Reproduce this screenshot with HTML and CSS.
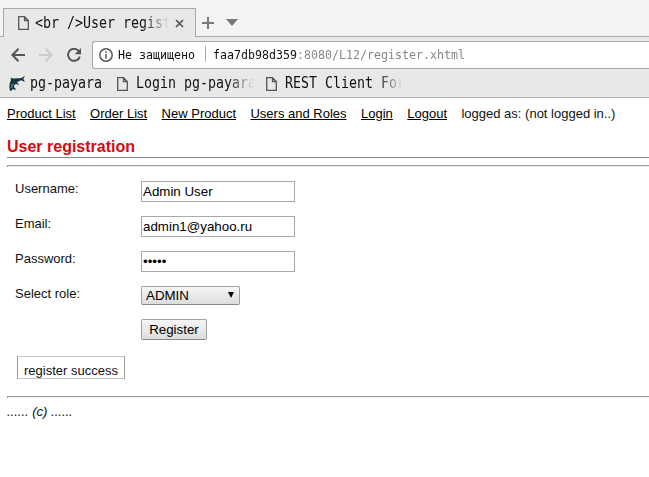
FILE: index.html
```html
<!DOCTYPE html>
<html lang="en">
<head>
<meta charset="utf-8">
<title>User registration</title>
<link rel="stylesheet" href="styles.css">
</head>
<body>
<header class="browser">
  <div class="tabstrip">
    <div class="tab">
      <svg class="doc" width="11" height="14" viewBox="0 0 11 14"><path d="M.7.7H6.5L10.3 4.5V13.3H.7ZM6.5.7V4.5H10.3"/></svg>
      <span class="mono tab-title">&lt;br /&gt;User regist</span>
      <svg class="close" width="9" height="9" viewBox="0 0 9 9"><path d="M1 1l7 7M8 1L1 8"/></svg>
    </div>
    <svg class="plus" width="12" height="12" viewBox="0 0 12 12"><path d="M6 0V12M0 6H12"/></svg>
    <svg class="caret" width="12" height="7" viewBox="0 0 12 7"><path d="M0 0H12L6 7Z"/></svg>
  </div>
  <div class="toolbar">
    <svg class="nav-icon" width="14" height="14" viewBox="0 0 14 14"><path d="M14 7H1.5M7.5 .8L1.3 7l6.2 6.2"/></svg>
    <svg class="nav-icon off" width="14" height="14" viewBox="0 0 14 14"><path d="M0 7H12.5M6.5 .8L12.7 7l-6.2 6.2"/></svg>
    <svg class="nav-icon" width="14" height="14" viewBox="0 0 14 14"><path d="M11.8 3.1A6 6 0 1 0 12.8 8.6"/><path class="tip" d="M14 0V6.3H7.7Z"/></svg>
    <div class="omnibox">
      <svg class="info" width="14" height="14" viewBox="0 0 14 14"><circle cx="7" cy="7" r="6.2"/><path d="M7 6V10.7M7 3.2V4.9"/></svg>
      <span class="mono small secure">Не защищено</span>
      <span class="mono small url">faa7db98d359<span class="path">:8080/L12/register.xhtml</span></span>
    </div>
  </div>
  <div class="bookmarks">
    <svg class="fish" width="17" height="17" viewBox="0 0 17 17"><path d="M.8 15C0 12 .3 8 2 5L1.500 2.800L4.500 3.600L9.500 3.200L12.500 3L16 .8L14.300 4L16 7L12 5.300L8 7.200L10.500 10L7 9C5.200 9.700 5 11 5 12L7.500 14.800L3.800 14.300L1.500 16.300Z"/><path class="belly" d="M2 10.500L4.500 9.500M1.800 12.500L3.600 11.800"/></svg>
    <span class="mono mark first">pg-payara</span>
    <svg class="doc" width="11" height="14" viewBox="0 0 11 14"><path d="M.7.7H6.5L10.3 4.5V13.3H.7ZM6.5.7V4.5H10.3"/></svg>
    <span class="mono mark fade">Login pg-payara</span>
    <svg class="doc" width="11" height="14" viewBox="0 0 11 14"><path d="M.7.7H6.5L10.3 4.5V13.3H.7ZM6.5.7V4.5H10.3"/></svg>
    <span class="mono mark fade">REST Client For</span>
  </div>
</header>
<main class="page">
  <nav class="links">
    <a href="#">Product List</a><a href="#">Order List</a><a href="#">New Product</a><a href="#">Users and Roles</a><a href="#">Login</a><a href="#">Logout</a><span>logged as: (not logged in..)</span>
  </nav>
  <h1>User registration</h1>
  <hr>
  <form class="form">
    <label for="user">Username:</label><input id="user" type="text" value="Admin User">
    <label for="mail">Email:</label><input id="mail" type="text" value="admin1@yahoo.ru">
    <label for="pass">Password:</label><input id="pass" type="password" value="12345">
    <label>Select role:</label><div class="select"><span>ADMIN</span><svg width="6" height="6" viewBox="0 0 6 6"><path d="M0 0H6L3 6Z"/></svg></div>
    <button type="button">Register</button>
  </form>
  <div class="message">register success</div>
  <hr>
  <footer>...... (c) ......</footer>
</main>
</body>
</html>
```
FILE: styles.css
```css
* { box-sizing: border-box; }
body {
  margin: 0;
  height: 477px;
  overflow: hidden;
  background: #fff;
  color: #111;
  font: 13px/15px "Liberation Sans", Arial, sans-serif;
}
svg { display: block; flex: none; fill: none; }
.browser { height: 98px; background: #e8e8e6; border-bottom: 1px solid #b0b0b0; }
.mono {
  display: block;
  flex: none;
  font: 13.3px/18px "DejaVu Sans Mono", monospace;
  white-space: pre;
  color: #111;
  transform: scaleY(1.13);
}
.small { font-size: 11.63px; }

.tabstrip {
  display: flex;
  height: 37px;
  padding: 8px 0 0 3px;
  background: #f3f3f3;
  box-shadow: inset 0 -1px #aaa;
}
.tab {
  display: flex;
  align-items: center;
  width: 193px;
  height: 29px;
  padding: 0 0 0 14px;
  background: #e8e8e6;
  border: 1px solid #aaa;
  border-bottom: 0;
}
.doc { stroke: #555; stroke-width: 1.3; }
.tab-title {
  width: 137px;
  margin-left: 6px;
  -webkit-mask-image: linear-gradient(90deg, #000 108px, transparent 134px);
  mask-image: linear-gradient(90deg, #000 108px, transparent 134px);
}
.close { margin-left: 3px; stroke: #555; stroke-width: 1.7; }
.plus { margin: 9px 0 0 6px; stroke: #777; stroke-width: 2; }
.caret { margin: 11px 0 0 12px; fill: #777; }

.toolbar { display: flex; height: 33px; padding: 4px 0 0 11px; }
.nav-icon { margin: 7px 14px 0 0; stroke: #555; stroke-width: 2; }
.nav-icon.off { stroke: #ccc; }
.nav-icon .tip { fill: #555; stroke: none; }
.omnibox {
  display: flex;
  align-items: center;
  flex: 1;
  height: 28px;
  margin-left: -3px;
  padding-left: 6px;
  background: #fff;
  border: 1px solid #a9a9a9;
  border-right: 0;
  border-radius: 3px 0 0 3px;
}
.info { stroke: #555; stroke-width: 1.5; }
.small { margin-bottom: 2px; }
.secure { width: 88px; margin-right: 7px; margin-left: 5px; border-right: 1px solid #aaa; line-height: 14px; }
.path { color: #888; }

.bookmarks { display: flex; align-items: center; height: 27px; padding-left: 9px; }
.mark { width: 122px; margin: 0 9px 1px 8px; }
.mark.first { width: 72px; margin: 0 15px 1px 4px; }
.mark + .doc + .mark + .doc { margin-left: -1px; }
.fade {
  -webkit-mask-image: linear-gradient(90deg, #000 92px, transparent 118px);
  mask-image: linear-gradient(90deg, #000 92px, transparent 118px);
}
.fish { fill: #123844; }
.belly { stroke: #a6c5ca; stroke-width: .8; }

.page { padding: 8px 0 0 7px; }
.links { display: flex; gap: 14.45px; white-space: nowrap; }
.links a { color: #000; text-decoration: underline; }
h1 {
  height: 20px;
  margin: 17px 0 7px;
  font-size: 16px;
  line-height: 18px;
  color: #d40b0e;
  border-bottom: 1px solid #808285;
}
hr { height: 2px; margin: 0; border: 0; border-top: 1px solid #9a9a9a; border-left: 1px solid #9a9a9a; background: #eee; }
.form {
  display: grid;
  grid-template-columns: 126px 154px;
  grid-template-rows: 35px 35px 35px 33px 21px;
  align-items: start;
  margin: 14px 0 0 8px;
}
input {
  width: 154px;
  height: 21px;
  padding: 1px;
  border: 1px solid #a9a9a9;
  font: 13.33px "Liberation Sans", Arial, sans-serif;
  color: #000;
  outline: 0;
}
.select, button {
  border: 1px solid #a2a2a2;
  border-bottom-color: #888;
  border-radius: 2px;
  background: linear-gradient(#f6f6f6, #ddd);
  color: #000;
  font: 13.33px/17px "Liberation Sans", Arial, sans-serif;
}
.select {
  display: flex;
  justify-content: space-between;
  align-items: center;
  width: 99px;
  height: 19px;
  padding: 0 5px 0 4px;
}
.select svg { fill: #000; margin-top: -2px; }
button { grid-column: 2; width: 66px; height: 21px; padding: 0; }
.message {
  width: 108px;
  height: 23px;
  margin: 16px 0 17px 10px;
  padding: 6px 0 0 6px;
  border: 1px solid #999;
  border-top-color: #c4c4c4;
  border-bottom-color: #c4c4c4;
  white-space: nowrap;
}
footer { margin-top: 6px; font-style: italic; }
```
